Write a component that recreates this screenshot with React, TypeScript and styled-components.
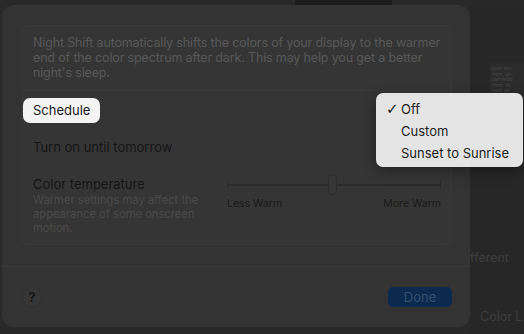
import React from "react";
import styled, { createGlobalStyle } from "styled-components";

const GlobalStyle = createGlobalStyle`
  html, body { margin: 0; padding: 0; }
  body {
    width: 524px;
    height: 334px;
    overflow: hidden;
    background: #282828;
    font-family: Inter, "Liberation Sans", sans-serif;
    -webkit-font-smoothing: antialiased;
  }
`;

const Page = styled.div`
  position: relative;
  width: 524px;
  height: 334px;
  display: flex;
  flex-direction: column;
  background: #292929;
  overflow: hidden;
`;

const TopStrip = styled.div`
  height: 5px;
  display: flex;
`;

const TopBlock = styled.div`
  margin-left: 295px;
  width: 97px;
  background: #1d1d1d;
`;

const Main = styled.div`
  display: flex;
  flex: 1;
`;

const Sheet = styled.div`
  margin-left: 2px;
  width: 468px;
  height: 322px;
  border-radius: 12px;
  background: #333333;
  display: flex;
  flex-direction: column;
  box-sizing: border-box;
  padding-top: 20px;
`;

const Group = styled.div`
  margin: 0 18px 0 20px;
  height: 220px;
  box-sizing: border-box;
  border: 1px solid #393939;
  border-radius: 6px;
  background: #353535;
  display: flex;
  flex-direction: column;
`;

const Description = styled.p`
  margin: 9px 10px 0;
  font-size: 12.5px;
  letter-spacing: -0.15px;
  line-height: 15px;
  color: #585858;
`;

const Divider = styled.div<{ $gap?: number }>`
  height: 1px;
  background: #393939;
  margin-top: ${(p) => p.$gap ?? 0}px;
`;

const Row = styled.div<{ $height: number }>`
  height: ${(p) => p.$height}px;
  display: flex;
  align-items: center;
  padding: 0 10px;
`;

const Label = styled.span`
  font-size: 13px;
  color: #151515;
`;

const HighlightLabel = styled.span`
  margin-left: -10px;
  height: 25px;
  padding: 0 10px;
  display: flex;
  align-items: center;
  border-radius: 7px;
  background: #f4f4f4;
  font-size: 13px;
  color: #1a1a1a;
`;

const TempRow = styled.div`
  display: flex;
  justify-content: space-between;
  padding: 10px 10px 0;
`;

const TempText = styled.div`
  display: flex;
  flex-direction: column;
  width: 190px;
`;

const Title = styled.span`
  font-size: 13px;
  line-height: 18px;
  color: #151515;
`;

const SubText = styled.span`
  font-size: 11.2px;
  line-height: 14px;
  color: #4a4a4a;
`;

const SliderCol = styled.div`
  width: 214px;
  display: flex;
  flex-direction: column;
  margin-top: -1px;
`;

const SliderTrack = styled.div`
  position: relative;
  height: 21px;
  display: flex;
  align-items: center;
`;

const TrackLine = styled.div`
  flex: 1;
  height: 2px;
  background: #2b2b2b;
`;

const Tick = styled.div`
  width: 1px;
  height: 7px;
  background: #2b2b2b;
`;

const Knob = styled.div`
  position: absolute;
  left: 101px;
  top: 0;
  width: 9px;
  height: 21px;
  box-sizing: border-box;
  border-radius: 5px;
  border: 1px solid #2c2c2c;
  background: #363636;
`;

const SliderLabels = styled.div`
  display: flex;
  justify-content: space-between;
  margin-top: 2px;
  font-size: 10.5px;
  line-height: 14px;
  color: #1a1a1a;
`;

const Footer = styled.div`
  height: 60px;
  display: flex;
  align-items: center;
  justify-content: space-between;
  padding: 0 18px 0 20px;
`;

const HelpButton = styled.div`
  width: 20px;
  height: 20px;
  border-radius: 50%;
  box-sizing: border-box;
  border: 1px solid #2f2f2f;
  background: #363636;
  display: flex;
  align-items: center;
  justify-content: center;
  font-size: 13px;
  font-weight: 600;
  color: #121212;
`;

const DoneButton = styled.div`
  width: 64px;
  height: 20px;
  border-radius: 5px;
  background: #0b2a4d;
  display: flex;
  align-items: center;
  justify-content: center;
  font-size: 13px;
  color: #33506f;
`;

const Side = styled.div`
  flex: 1;
  display: flex;
  flex-direction: column;
  overflow: hidden;
  background: #272727;
`;

const Thumb = styled.div`
  margin: 58px 0 0 20px;
  height: 32px;
  background: #2c2c2c;
  padding: 4px 2px;
  box-sizing: border-box;
  display: flex;
  flex-direction: column;
  gap: 1px;
  overflow: hidden;
`;

const ThumbLine = styled.span`
  font-size: 4.5px;
  line-height: 4.5px;
  white-space: nowrap;
  color: #4a4a4a;
`;

const SideText = styled.span<{ $top: number; $left: number }>`
  margin: ${(p) => p.$top}px 0 0 ${(p) => p.$left}px;
  font-size: 12.5px;
  line-height: 16px;
  white-space: nowrap;
  color: #3d3d3d;
`;

const Menu = styled.div`
  position: absolute;
  left: 376px;
  top: 93px;
  width: 147px;
  height: 74px;
  box-sizing: border-box;
  padding-top: 5px;
  border-radius: 7px;
  background: #e4e4e4;
  box-shadow: 0 4px 14px rgba(0, 0, 0, 0.35);
`;

const MenuItem = styled.div`
  height: 22px;
  display: flex;
  align-items: center;
  font-size: 13px;
  color: #1c1c1c;
`;

const Check = styled.span`
  width: 25px;
  padding-left: 10px;
  box-sizing: border-box;
  font-family: "DejaVu Sans", sans-serif;
  font-size: 15px;
  line-height: 15px;
  font-weight: 700;
`;

export default function App() {
  return (
    <>
      <GlobalStyle />
      <Page>
        <TopStrip>
          <TopBlock />
        </TopStrip>
        <Main>
          <Sheet>
            <Group>
              <Description>
                Night Shift automatically shifts the colors of your display to the warmer end of the
                color spectrum after dark. This may help you get a better night's sleep.
              </Description>
              <Divider $gap={10} />
              <Row $height={38}>
                <HighlightLabel>Schedule</HighlightLabel>
              </Row>
              <Row $height={36}>
                <Label>Turn on until tomorrow</Label>
              </Row>
              <TempRow>
                <TempText>
                  <Title>Color temperature</Title>
                  <SubText>
                    Warmer settings may affect the appearance of some onscreen motion.
                  </SubText>
                </TempText>
                <SliderCol>
                  <SliderTrack>
                    <Tick />
                    <TrackLine />
                    <Tick />
                    <Knob />
                  </SliderTrack>
                  <SliderLabels>
                    <span>Less Warm</span>
                    <span>More Warm</span>
                  </SliderLabels>
                </SliderCol>
              </TempRow>
            </Group>
            <Divider $gap={21} />
            <Footer>
              <HelpButton>?</HelpButton>
              <DoneButton>Done</DoneButton>
            </Footer>
          </Sheet>
          <Side>
            <Thumb>
              <ThumbLine>been sho</ThumbLine>
              <ThumbLine>more, an</ThumbLine>
              <ThumbLine>can avoid</ThumbLine>
              <ThumbLine>them. Ab</ThumbLine>
              <ThumbLine>more as</ThumbLine>
            </Thumb>
            <SideText $top={155} $left={0}>fferent</SideText>
            <SideText $top={43} $left={10}>Color L</SideText>
          </Side>
        </Main>
        <Menu>
          <MenuItem>
            <Check>✓</Check>Off
          </MenuItem>
          <MenuItem>
            <Check />Custom
          </MenuItem>
          <MenuItem>
            <Check />Sunset to Sunrise
          </MenuItem>
        </Menu>
      </Page>
    </>
  );
}
